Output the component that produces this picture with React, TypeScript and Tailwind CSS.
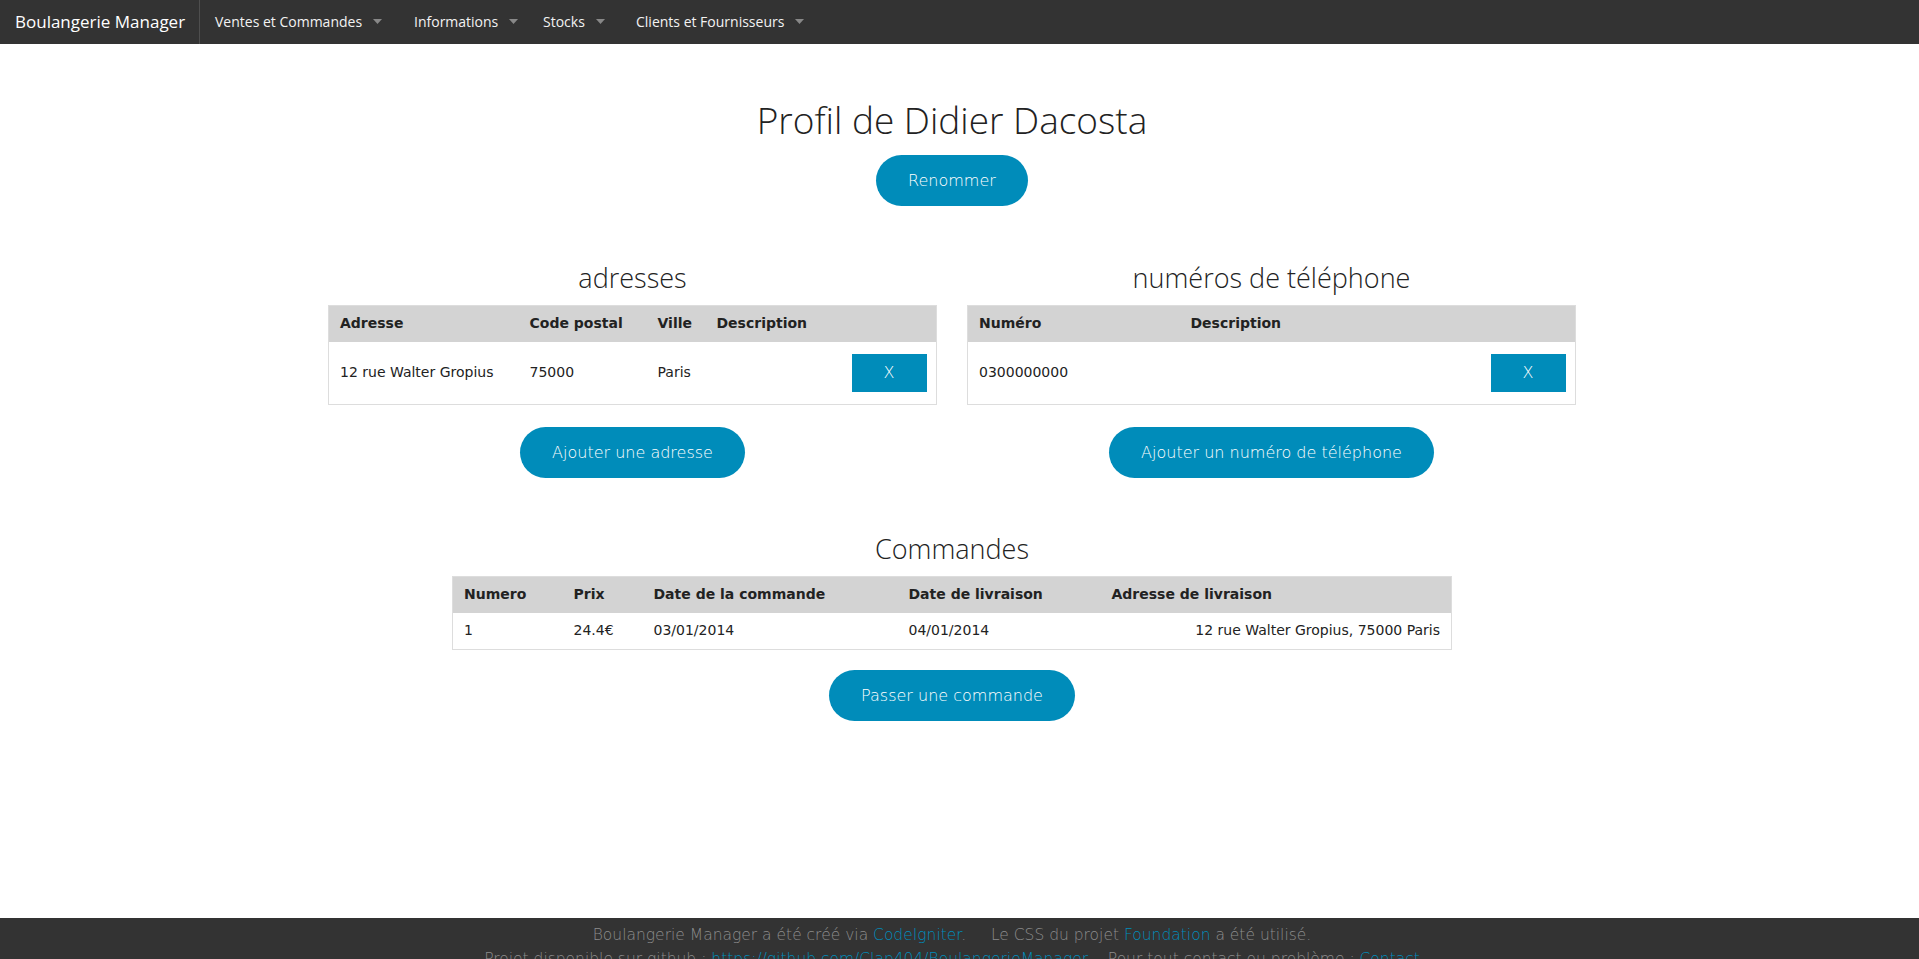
import { Fragment } from "react";

const navItems = [
  { label: "Ventes et Commandes", w: "w-[199px]" },
  { label: "Informations", w: "w-[129px]" },
  { label: "Stocks", w: "w-[93px]" },
  { label: "Clients et Fournisseurs", w: "" },
];

const Caret = () => (
  <svg width="9" height="5" viewBox="0 0 9 5" className="ml-[11px] mt-[1px]">
    <polygon points="0,0 9,0 4.5,5" fill="#888888" />
  </svg>
);

const BlueButton = ({ label }: { label: string }) => (
  <button className="bg-[#008cba] text-white rounded-full px-8 py-4 text-[16px] leading-[19px] font-extralight [font-family:'DejaVu_Sans',sans-serif]">
    {label}
  </button>
);

const DeleteButton = () => (
  <button className="bg-[#008cba] text-white w-[75px] h-[38px] text-[16px] font-extralight [font-family:'DejaVu_Sans',sans-serif]">
    X
  </button>
);

const th = "text-left font-bold text-[14px] text-[#222] px-[11px] h-[36px]";
const td = "text-[14px] text-[#222] px-[11px]";

export default function App() {
  return (
    <div className="min-h-screen bg-white [font-family:'Open_Sans',sans-serif]">
      {/* top bar */}
      <nav className="h-[44px] bg-[#333] flex items-stretch">
        <div className="w-[200px] border-r border-[#4e4e4e] flex items-center pl-[15px] pb-[1px] text-white text-[17px]">
          Boulangerie Manager
        </div>
        <ul className="flex items-center pl-[15px] pb-[2px]">
          {navItems.map((item) => (
            <li key={item.label} className={"flex items-center text-[#f2f2f2] text-[14px] " + item.w}>
              {item.label}
              <Caret />
            </li>
          ))}
        </ul>
      </nav>

      <main className="min-h-[874px] flex flex-col items-center pt-[54px] pr-[15px] [font-family:'DejaVu_Sans',sans-serif]">
        <h2 className="text-[37px] leading-[44px] font-light text-[#222] [font-family:'Open_Sans',sans-serif]">
          Profil de Didier Dacosta
        </h2>
        <div className="mt-[13px]">
          <BlueButton label="Renommer" />
        </div>

        <div className="mt-[56px] flex gap-[30px]">
          <section className="w-[609px] flex flex-col items-center">
            <h3 className="text-[27px] leading-[32px] font-light text-[#222] [font-family:'Open_Sans',sans-serif]">adresses</h3>
            <table className="mt-[11px] w-full table-fixed border border-[#ddd] border-collapse">
              <colgroup>
                <col className="w-[190px]" />
                <col className="w-[128px]" />
                <col className="w-[59px]" />
                <col className="w-[135px]" />
                <col />
              </colgroup>
              <thead className="bg-[#d3d3d3]">
                <tr>
                  <th className={th}>Adresse</th>
                  <th className={th}>Code postal</th>
                  <th className={th}>Ville</th>
                  <th className={th}>Description</th>
                  <th className={th}></th>
                </tr>
              </thead>
              <tbody>
                <tr className="h-[63px]">
                  <td className={td}>12 rue Walter Gropius</td>
                  <td className={td}>75000</td>
                  <td className={td}>Paris</td>
                  <td className={td}></td>
                  <td className={td + " text-right"}>
                    <DeleteButton />
                  </td>
                </tr>
              </tbody>
            </table>
            <div className="mt-[22px]">
              <BlueButton label="Ajouter une adresse" />
            </div>
          </section>

          <section className="w-[609px] flex flex-col items-center">
            <h3 className="text-[27px] leading-[32px] font-light text-[#222] [font-family:'Open_Sans',sans-serif]">
              numéros de téléphone
            </h3>
            <table className="mt-[11px] w-full table-fixed border border-[#ddd] border-collapse">
              <colgroup>
                <col className="w-[212px]" />
                <col className="w-[300px]" />
                <col />
              </colgroup>
              <thead className="bg-[#d3d3d3]">
                <tr>
                  <th className={th}>Numéro</th>
                  <th className={th}>Description</th>
                  <th className={th}></th>
                </tr>
              </thead>
              <tbody>
                <tr className="h-[63px]">
                  <td className={td}>0300000000</td>
                  <td className={td}></td>
                  <td className={td + " text-right"}>
                    <DeleteButton />
                  </td>
                </tr>
              </tbody>
            </table>
            <div className="mt-[22px]">
              <BlueButton label="Ajouter un numéro de téléphone" />
            </div>
          </section>
        </div>

        <h3 className="mt-[55px] text-[27px] leading-[32px] font-light text-[#222] [font-family:'Open_Sans',sans-serif]">
          Commandes
        </h3>
        <table className="mt-[11px] w-[1000px] table-fixed border border-[#ddd] border-collapse">
          <colgroup>
            <col className="w-[110px]" />
            <col className="w-[80px]" />
            <col className="w-[255px]" />
            <col className="w-[203px]" />
            <col />
          </colgroup>
          <thead className="bg-[#d3d3d3]">
            <tr>
              <th className={th}>Numero</th>
              <th className={th}>Prix</th>
              <th className={th}>Date de la commande</th>
              <th className={th}>Date de livraison</th>
              <th className={th}>Adresse de livraison</th>
            </tr>
          </thead>
          <tbody>
            <tr className="h-[37px]">
              <td className={td}>1</td>
              <td className={td}>24.4€</td>
              <td className={td}>03/01/2014</td>
              <td className={td}>04/01/2014</td>
              <td className={td + " text-right"}>12 rue Walter Gropius, 75000 Paris</td>
            </tr>
          </tbody>
        </table>
        <div className="mt-[20px]">
          <BlueButton label="Passer une commande" />
        </div>
      </main>

      <footer className="bg-[#333] pt-[5px] pb-[10px] pr-[15px] text-center text-[15.5px] leading-[24px] text-[#8c8c8c] font-extralight [font-family:'DejaVu_Sans',sans-serif]">
        <p>
          Boulangerie Manager a été créé via <a className="text-[#008cba]">CodeIgniter</a>.{"\u00a0\u00a0\u00a0\u00a0 "}Le CSS du projet{" "}
          <a className="text-[#008cba]">Foundation</a> a été utilisé.
        </p>
        <p>
          {[
            <Fragment key="a">
              Projet disponible sur github :{" "}
              <a className="text-[#008cba]">https://github.com/Clap404/BoulangerieManager</a>
            </Fragment>,
            <Fragment key="b">
              {"\u00a0\u00a0\u00a0 "}Pour tout contact ou problème : <a className="text-[#008cba]">Contact</a>
            </Fragment>,
          ]}
        </p>
      </footer>
    </div>
  );
}
